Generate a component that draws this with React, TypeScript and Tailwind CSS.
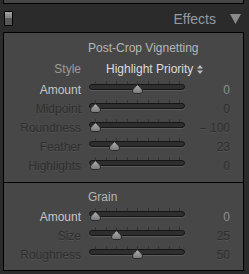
import type { CSSProperties } from "react";

type SliderRow = {
  label: string;
  value: string;
  pos: number; // 0..1 along the track
  active?: boolean;
};

const vignetteRows: SliderRow[] = [
  { label: "Amount", value: "0", pos: 0.5, active: true },
  { label: "Midpoint", value: "0", pos: 0 },
  { label: "Roundness", value: "– 100", pos: 0 },
  { label: "Feather", value: "23", pos: 0.23 },
  { label: "Highlights", value: "0", pos: 0 },
];

const grainRows: SliderRow[] = [
  { label: "Amount", value: "0", pos: 0, active: true },
  { label: "Size", value: "25", pos: 0.25 },
  { label: "Roughness", value: "50", pos: 0.5 },
];

const TICKS = [0, 1, 2, 3, 4, 5, 6, 7, 8];

function Thumb({ left }: { left: number }) {
  return (
    <svg
      width="11"
      height="10"
      viewBox="0 0 11 10"
      className="absolute top-[4px]"
      style={{ left } as CSSProperties}
    >
      <defs>
        <linearGradient id="thumbFill" x1="0" y1="0" x2="0" y2="1">
          <stop offset="0" stopColor="#b4b4b4" />
          <stop offset="1" stopColor="#767676" />
        </linearGradient>
      </defs>
      <path
        d="M5.5 0.5 C6.5 2.5 10.5 4.5 10.5 7 C10.5 8.8 9.2 9.5 8 9.5 H3 C1.8 9.5 0.5 8.8 0.5 7 C0.5 4.5 4.5 2.5 5.5 0.5 Z"
        fill="url(#thumbFill)"
        stroke="#2a2a2a"
        strokeWidth="1"
      />
    </svg>
  );
}

function Slider({ row }: { row: SliderRow }) {
  const thumbCenter = 6 + row.pos * 84;
  return (
    <div className="flex h-[19px] items-center">
      <div
        className={`w-[77px] text-right leading-none ${
          row.active ? "text-[#c6c6c6]" : "text-[#2f2f2f] [text-shadow:0_1px_0_rgba(255,255,255,0.07)]"
        }`}
      >
        {row.label}
      </div>
      <div className="relative ml-[8px] h-[19px] w-[96px]">
        {TICKS.map((i) => (
          <div
            key={i}
            className="absolute top-[1px] h-[3px] w-px bg-[#333333]"
            style={{ left: Math.round(6 + i * 10.5) }}
          />
        ))}
        <div className="absolute left-0 right-0 top-[4px] h-[6px] rounded-[3px] border border-[#161616] bg-[#2e2e2e] shadow-[0_1px_0_#5c5c5c]" />
        <Thumb left={Math.round(thumbCenter - 5.5)} />
      </div>
      <div
        className={`w-[45px] text-right leading-none ${
          row.active ? "text-[#8e8e8e]" : "text-[#2f2f2f] [text-shadow:0_1px_0_rgba(255,255,255,0.07)]"
        }`}
      >
        {row.value}
      </div>
    </div>
  );
}

export default function App() {
  return (
    <div className="h-[274px] w-[249px] overflow-hidden bg-[#2b2b2b] font-['Liberation_Sans',Arial,sans-serif] text-[12px]">
      {/* previous panel, cut off */}
      <div className="ml-[3px] h-[4px] w-[241px] border-x border-b border-black bg-[#474747]" />

      {/* Header */}
      <div className="relative flex h-[28px] items-center">
        <div className="ml-[4px] flex h-[15px] w-[9px] flex-col overflow-hidden rounded-[1px] border border-black">
          <div className="h-1/2 bg-gradient-to-b from-[#a4a4a4] to-[#808080]" />
          <div className="h-1/2 bg-[#575757]" />
        </div>
        <span className="ml-auto mt-[1px] text-[14px] leading-none text-[#909ba4]">Effects</span>
        <svg width="11" height="10" viewBox="0 0 11 10" className="ml-[14px] mr-[8px] mt-[1px]">
          <path d="M0 0 H11 L5.5 10 Z" fill="#8a8a8a" />
        </svg>
      </div>

      {/* Effects panel */}
      <div className="ml-[3px] h-[239px] w-[241px] border border-black bg-[#474747]">
        {/* Post-Crop Vignetting */}
        <div className="h-[149px] pt-[5px]">
          <div className="flex h-[20px] items-center pl-[84px] leading-none text-[#b6b6b6]">
            Post-Crop Vignetting
          </div>
          <div className="flex h-[22px] items-center">
            <div className="w-[77px] text-right leading-none text-[#9c9c9c]">Style</div>
            <div className="ml-[25px] flex items-center leading-none text-[#dcdcdc]">
              Highlight Priority
              <svg width="6" height="9" viewBox="0 0 6 9" className="ml-[4px]">
                <path d="M3 0 L6 3.5 H0 Z M0 5.5 H6 L3 9 Z" fill="#bdbdbd" />
              </svg>
            </div>
          </div>
          {vignetteRows.map((row) => (
            <Slider key={row.label} row={row} />
          ))}
        </div>

        {/* Grain */}
        <div className="h-[88px] border-t border-black pt-[4px]">
          <div className="flex h-[20px] items-center pl-[84px] leading-none text-[#b6b6b6]">Grain</div>
          {grainRows.map((row) => (
            <Slider key={row.label} row={row} />
          ))}
        </div>
      </div>
    </div>
  );
}
